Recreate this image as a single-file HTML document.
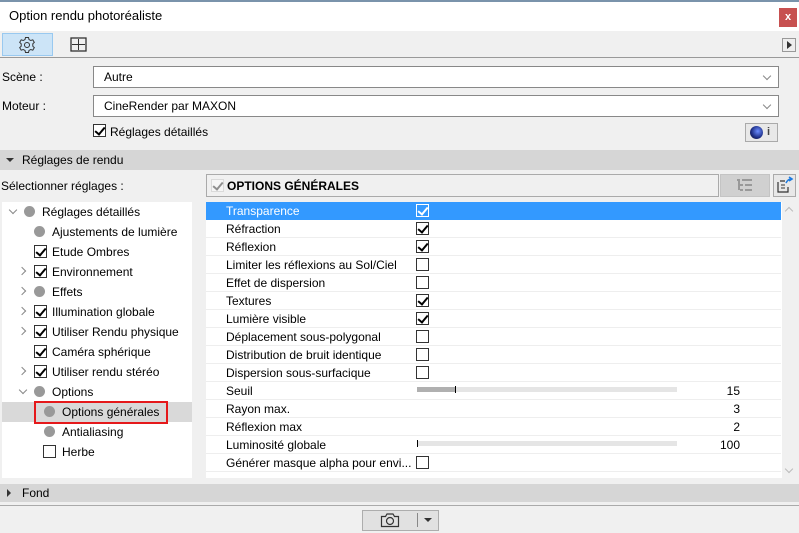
<!DOCTYPE html>
<html><head><meta charset="utf-8"><style>
*{box-sizing:border-box;margin:0;padding:0}
body{width:799px;height:533px;background:#f0f0f0;font-family:"Liberation Sans",sans-serif;font-size:12px;color:#000;position:relative;overflow:hidden}
.a{position:absolute}
.cb{position:absolute;width:13px;height:13px;border:1px solid #333;background:#fff}
.cb.c::after{content:"";position:absolute;left:3px;top:0px;width:4px;height:8px;border:solid #000;border-width:0 2px 2px 0;transform:rotate(40deg)}
.cb.w::after{border-color:#fff}
.dot{position:absolute;width:11px;height:11px;border-radius:50%;background:#999}
.chev{position:absolute;width:6px;height:6px;border:solid #888;border-width:0 1.5px 1.5px 0}
.row{position:absolute;left:206px;width:575px;height:18px;border-bottom:1px solid #eee;background:#fff}
.row span{position:absolute;left:20px;top:2px}
.row .cb{left:210px;top:2px}
.num{position:absolute;right:41px;top:2px}
</style></head><body>
<div class="a" style="left:0;top:0;width:799px;height:2px;background:#7a93ab"></div>
<div class="a" style="left:0;top:2px;width:799px;height:29px;background:#fff"></div>
<div class="a" style="left:9px;top:8px;font-size:13px">Option rendu photoréaliste</div>
<div class="a" style="left:779px;top:8px;width:18px;height:19px;background:#c75050;color:#fff;font-size:11px;font-weight:bold;text-align:center;line-height:18px">x</div>
<div class="a" style="left:2px;top:33px;width:51px;height:23px;background:#cce4f7;border:1px solid #99c9f0"></div>
<svg class="a" style="left:18px;top:36px" width="18" height="18" viewBox="0 0 18 18"><circle cx="9" cy="9" r="2.5" fill="none" stroke="#333"/><path d="M7.5 1.5h3l.5 2 1.8 1 2-.7 1.5 2.6-1.5 1.4v2.4l1.5 1.4-1.5 2.6-2-.7-1.8 1-.5 2h-3l-.5-2-1.8-1-2 .7-1.5-2.6 1.5-1.4V7.8L1.7 6.4l1.5-2.6 2 .7 1.8-1z" fill="none" stroke="#333"/></svg>
<svg class="a" style="left:70px;top:37px" width="18" height="16" viewBox="0 0 18 16"><rect x="1" y="1" width="15" height="13" fill="none" stroke="#333" stroke-width="1.3"/><path d="M8.5 2v11M2 7.5h13" stroke="#333"/></svg>
<div class="a" style="left:782px;top:38px;width:14px;height:14px;border:1px solid #999;background:#eee"></div>
<div class="a" style="left:787px;top:41px;border-left:5px solid #333;border-top:4px solid transparent;border-bottom:4px solid transparent"></div>
<div class="a" style="left:0;top:57px;width:799px;height:1px;background:#999"></div>
<div class="a" style="left:2px;top:70px">Scène :</div>
<div class="a" style="left:93px;top:66px;width:686px;height:22px;background:#fff;border:1px solid #888"></div>
<div class="a" style="left:104px;top:70px">Autre</div>
<div class="chev" style="left:764px;top:73px;transform:rotate(45deg)"></div>
<div class="a" style="left:2px;top:99px">Moteur :</div>
<div class="a" style="left:93px;top:95px;width:686px;height:22px;background:#fff;border:1px solid #888"></div>
<div class="a" style="left:104px;top:99px">CineRender par MAXON</div>
<div class="chev" style="left:764px;top:102px;transform:rotate(45deg)"></div>
<div class="cb c" style="left:93px;top:124px"></div>
<div class="a" style="left:110px;top:125px">Réglages détaillés</div>
<div class="a" style="left:745px;top:123px;width:33px;height:19px;border:1px solid #aaa;background:#e8e8e8"></div>
<div class="a" style="left:750px;top:126px;width:13px;height:13px;border-radius:50%;background:radial-gradient(circle at 60% 40%,#6a8cff,#1a2a80 60%,#222)"></div>
<div class="a" style="left:767px;top:126px;font-weight:bold;color:#444;font-size:11px">i</div>
<div class="a" style="left:0;top:150px;width:799px;height:20px;background:#d6d6d6"></div>
<div class="a" style="left:6px;top:158px;border-top:4px solid #333;border-left:4px solid transparent;border-right:4px solid transparent"></div>
<div class="a" style="left:22px;top:153px">Réglages de rendu</div>
<div class="a" style="left:1px;top:179px">Sélectionner réglages :</div>
<div class="a" style="left:206px;top:174px;width:513px;height:23px;border:1px solid #aaa;background:#f0f0f0"></div>
<div class="cb c" style="left:211px;top:179px;border-color:#bbb;opacity:.4"></div>
<div class="a" style="left:227px;top:179px;font-weight:bold">OPTIONS GÉNÉRALES</div>
<div class="a" style="left:720px;top:174px;width:50px;height:23px;background:#d0d0d0;border:1px solid #c4c4c4"></div>
<svg class="a" style="left:736px;top:178px" width="18" height="14"><path d="M1 2h3M6 2h10M4 7h3M9 7h7M4 12h3M9 12h7M3 3v9" stroke="#999" stroke-width="2"/></svg>
<div class="a" style="left:773px;top:174px;width:23px;height:23px;border:1px solid #aaa;background:#e8e8e8"></div>
<svg class="a" style="left:776px;top:176px" width="18" height="18"><path d="M4 5h5M4 16h8V11M2 6v10h2" fill="none" stroke="#333" stroke-width="1.2"/><path d="M5 9h4M5 12h4" fill="none" stroke="#333"/><path d="M10 7q2-4 5-4M13 1l3 2-3 2" fill="none" stroke="#1e7be0" stroke-width="1.6"/></svg>
<div class="a" style="left:2px;top:202px;width:190px;height:276px;background:#fff"></div>
<div class="a" style="left:2px;top:402px;width:190px;height:20px;background:#d9d9d9"></div>
<div class="a" style="left:34px;top:401px;width:134px;height:23px;border:2px solid #e5191b"></div>
<div class="chev" style="left:10px;top:207px;transform:rotate(45deg)"></div>
<div class="dot" style="left:24px;top:206px"></div><div class="a" style="left:42px;top:205px">Réglages détaillés</div>
<div class="dot" style="left:34px;top:226px"></div><div class="a" style="left:52px;top:225px">Ajustements de lumière</div>
<div class="cb c" style="left:34px;top:245px"></div><div class="a" style="left:52px;top:245px">Etude Ombres</div>
<div class="chev" style="left:19px;top:268px;transform:rotate(-45deg)"></div>
<div class="cb c" style="left:34px;top:265px"></div><div class="a" style="left:52px;top:265px">Environnement</div>
<div class="chev" style="left:19px;top:288px;transform:rotate(-45deg)"></div>
<div class="dot" style="left:34px;top:286px"></div><div class="a" style="left:52px;top:285px">Effets</div>
<div class="chev" style="left:19px;top:308px;transform:rotate(-45deg)"></div>
<div class="cb c" style="left:34px;top:305px"></div><div class="a" style="left:52px;top:305px">Illumination globale</div>
<div class="chev" style="left:19px;top:328px;transform:rotate(-45deg)"></div>
<div class="cb c" style="left:34px;top:325px"></div><div class="a" style="left:52px;top:325px">Utiliser Rendu physique</div>
<div class="cb c" style="left:34px;top:345px"></div><div class="a" style="left:52px;top:345px">Caméra sphérique</div>
<div class="chev" style="left:19px;top:368px;transform:rotate(-45deg)"></div>
<div class="cb c" style="left:34px;top:365px"></div><div class="a" style="left:52px;top:365px">Utiliser rendu stéréo</div>
<div class="chev" style="left:20px;top:387px;transform:rotate(45deg)"></div>
<div class="dot" style="left:34px;top:386px"></div><div class="a" style="left:52px;top:385px">Options</div>
<div class="dot" style="left:44px;top:406px"></div><div class="a" style="left:62px;top:405px">Options générales</div>
<div class="dot" style="left:44px;top:426px"></div><div class="a" style="left:62px;top:425px">Antialiasing</div>
<div class="cb" style="left:43px;top:445px"></div><div class="a" style="left:62px;top:445px">Herbe</div>
<div class="a" style="left:206px;top:202px;width:576px;height:276px;background:#fff"></div>
<div class="row" style="top:202px;background:#3399ff;color:#fff;border:0"><span>Transparence</span><div class="cb c w" style="border-color:#fff;background:#3399ff"></div></div>
<div class="row" style="top:220px"><span>Réfraction</span><div class="cb c"></div></div>
<div class="row" style="top:238px"><span>Réflexion</span><div class="cb c"></div></div>
<div class="row" style="top:256px"><span>Limiter les réflexions au Sol/Ciel</span><div class="cb"></div></div>
<div class="row" style="top:274px"><span>Effet de dispersion</span><div class="cb"></div></div>
<div class="row" style="top:292px"><span>Textures</span><div class="cb c"></div></div>
<div class="row" style="top:310px"><span>Lumière visible</span><div class="cb c"></div></div>
<div class="row" style="top:328px"><span>Déplacement sous-polygonal</span><div class="cb"></div></div>
<div class="row" style="top:346px"><span>Distribution de bruit identique</span><div class="cb"></div></div>
<div class="row" style="top:364px"><span>Dispersion sous-surfacique</span><div class="cb"></div></div>
<div class="row" style="top:382px"><span>Seuil</span><div class="a" style="left:211px;top:5px;width:260px;height:5px;background:#e5e5e5"></div><div class="a" style="left:211px;top:5px;width:39px;height:5px;background:#b0b0b0"></div><div class="a" style="left:249px;top:4px;width:1px;height:7px;background:#000"></div><div class="num">15</div></div>
<div class="row" style="top:400px"><span>Rayon max.</span><div class="num">3</div></div>
<div class="row" style="top:418px"><span>Réflexion max</span><div class="num">2</div></div>
<div class="row" style="top:436px"><span>Luminosité globale</span><div class="a" style="left:211px;top:5px;width:260px;height:5px;background:#e5e5e5"></div><div class="a" style="left:211px;top:4px;width:1px;height:7px;background:#000"></div><div class="num">100</div></div>
<div class="row" style="top:454px"><span>Générer masque alpha pour envi...</span><div class="cb"></div></div>
<div class="a" style="left:786px;top:208px;width:6px;height:6px;border:solid #bbb;border-width:1.5px 0 0 1.5px;transform:rotate(45deg)"></div>
<div class="a" style="left:786px;top:466px;width:6px;height:6px;border:solid #bbb;border-width:0 1.5px 1.5px 0;transform:rotate(45deg)"></div>
<div class="a" style="left:0;top:484px;width:799px;height:18px;background:#d6d6d6"></div>
<div class="a" style="left:7px;top:489px;border-left:4px solid #333;border-top:4px solid transparent;border-bottom:4px solid transparent"></div>
<div class="a" style="left:22px;top:486px">Fond</div>
<div class="a" style="left:0;top:505px;width:799px;height:1px;background:#aaa"></div>
<div class="a" style="left:362px;top:510px;width:77px;height:21px;background:#e1e1e1;border:1px solid #adadad"></div>
<svg class="a" style="left:380px;top:512px" width="20" height="16"><path d="M1.5 4.5h4l1.5-2.5h6l1.5 2.5h4v10h-17z" fill="none" stroke="#333" stroke-width="1.2"/><circle cx="10" cy="9" r="3.5" fill="none" stroke="#333" stroke-width="1.2"/></svg>
<div class="a" style="left:417px;top:513px;width:1px;height:14px;background:#888"></div>
<div class="a" style="left:424px;top:518px;border-top:4px solid #333;border-left:4px solid transparent;border-right:4px solid transparent"></div>
</body></html>
